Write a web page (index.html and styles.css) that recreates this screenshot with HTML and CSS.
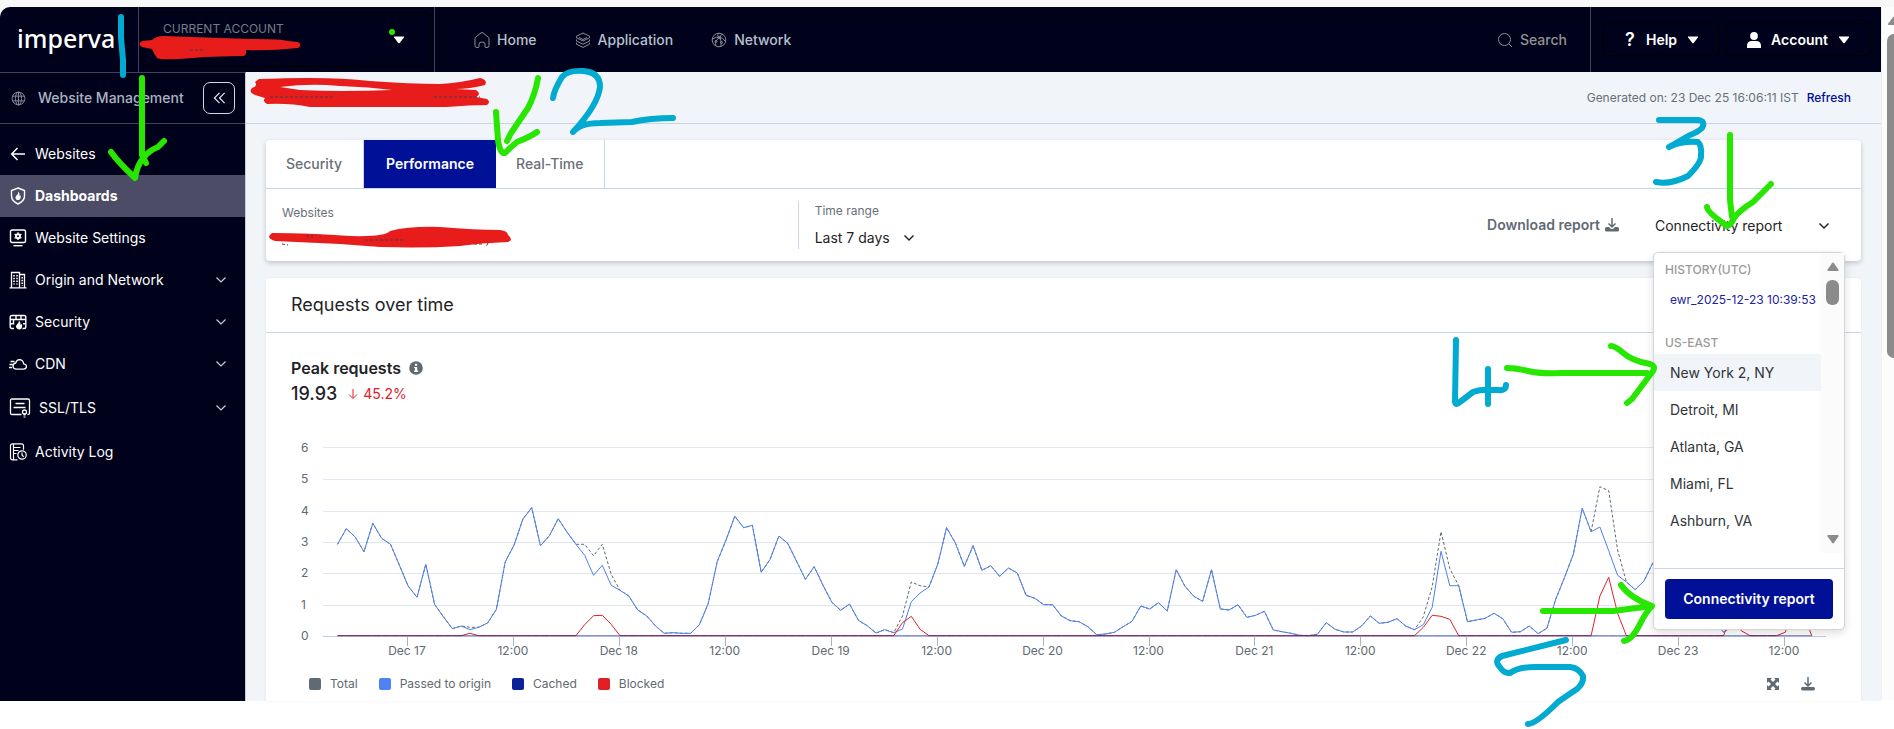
FILE: index.html
```html
<!DOCTYPE html>
<html lang="en">
<head>
<meta charset="utf-8">
<title>imperva - Performance dashboard</title>
<link rel="stylesheet" href="styles.css">
</head>
<body>
<div class="window">
  <div class="app">
    <header class="topbar">
      <a class="logo" href="#">imperva</a>
      <div class="account-cell">
        <button class="account-switch" type="button">
          <span class="account-label">CURRENT ACCOUNT</span>
          <svg class="caret" viewBox="0 0 12 8"><path d="M1.500 0.500h9q1 0 .4.900L6.700 7q-.7.700-1.400 0L1.100 1.400Q.5.500 1.500.500z"/></svg>
        </button>
      </div>
      <nav class="main-nav">
        <a href="#"><svg class="icon" viewBox="0 0 16 16"><path d="M1 6.500Q1 5.600 1.800 5L7 .900q1-.7 2 0L14.200 5q.8.600.8 1.500v7q0 2-2 2h-1q-1 0-1-1V12q0-2-3-2t-3 2v2.500q0 1-1 1H3q-2 0-2-2z"/></svg>Home</a>
        <a href="#"><svg class="icon" viewBox="0 0 16 16"><path d="M8 1l6.500 3.200v1.600L8 9 1.500 5.800V4.200zM1.500 7.500v1.500L8 12.200 14.500 9V7.500M1.500 10.700v1.500L8 15.400l6.500-3.200v-1.500M4 5.500l4 2 4-2"/></svg>Application</a>
        <a href="#"><svg class="icon" viewBox="0 0 16 16"><circle cx="8" cy="8" r="6.800"/><path d="M1.500 7q4-3 7-1.500M8 1.300Q5 4 8.500 5.500q2 2 1.500 9M8.500 5.500q3-.5 6 4M11 2Q9.500 4 8.500 5.500M5 14q-2-5 3-8"/><circle cx="8.500" cy="5.500" r="1.200"/><circle cx="5" cy="9.500" r="1"/><circle cx="10.500" cy="10.500" r="1"/></svg>Network</a>
      </nav>
      <button class="search" type="button"><svg class="icon" viewBox="0 0 16 16"><circle cx="7.500" cy="7.500" r="6"/><path d="M12 12l3 3"/></svg>Search</button>
      <div class="user-cell">
        <button class="menu-btn" type="button"><span class="question">?</span>Help<svg class="caret" viewBox="0 0 12 8"><path d="M1.500 0.500h9q1 0 .4.900L6.700 7q-.7.700-1.400 0L1.100 1.400Q.5.500 1.500.500z"/></svg></button>
        <button class="menu-btn" type="button"><svg class="person" viewBox="0 0 14 16"><circle cx="7" cy="4" r="3.900"/><path d="M0 16v-2q0-5 5-5h4q5 0 5 5v2z"/></svg>Account<svg class="caret" viewBox="0 0 12 8"><path d="M1.500 0.500h9q1 0 .4.900L6.700 7q-.7.700-1.400 0L1.100 1.400Q.5.500 1.500.500z"/></svg></button>
      </div>
    </header>

    <div class="body">
      <aside class="sidebar">
        <div class="side-head">
          <svg class="icon" viewBox="0 0 16 16"><circle cx="8" cy="8" r="6.800"/><ellipse cx="8" cy="8" rx="3.200" ry="6.800"/><path d="M1.800 5.500h12.400M1.800 10.500h12.400M8 1v14"/></svg>
          <span>Website Management</span>
          <button type="button" aria-label="Collapse"><svg viewBox="0 0 14 14"><path d="M7 1.500L1.500 7 7 12.500M12.500 1.500L7 7l5.500 5.500"/></svg></button>
        </div>
        <ul class="side-list">
          <li><a href="#"><svg class="s-icon" viewBox="0 0 18 18"><path stroke-width="1.500" d="M16 9H3M8.500 3L2.700 9l5.800 6"/></svg>Websites</a></li>
          <li><a class="active" href="#"><svg class="s-icon" viewBox="0 0 18 18"><path stroke-width="1.400" d="M9 1l6.500 2.500V9q0 5-6.500 8Q2.500 14 2.500 9V3.500z"/><path class="fill" d="M9.500 4.500Q9.300 7 7.500 8.500 5.500 10.500 7 12.200q2 1.800 4 0 1.500-1.700.5-4l-1 1q.3-3-1-4.700z"/></svg>Dashboards</a></li>
          <li><a href="#"><svg class="s-icon" viewBox="0 0 18 18"><rect x="1.500" y="1" width="15" height="12.500" rx="1.500" stroke-width="1.400"/><path stroke-width="1.400" d="M4.500 16.700h9"/><circle cx="9" cy="7.200" r="2" stroke-width="2"/><path stroke-width="1.400" d="M9 3.300v1.400M9 9.700v1.400M5.600 5.200l1.200.7M11.200 8.500l1.200.7M5.600 9.200l1.200-.7M11.200 5.900l1.200-.7"/></svg>Website Settings</a></li>
          <li><a href="#"><svg class="s-icon" viewBox="0 0 18 18"><path stroke-width="1.300" d="M.5 16.800h17M2.500 16.500V1.500h8v15M10.500 3.500h5v13"/><path stroke-width="1.600" stroke-dasharray="1.500 1.300" d="M5 4v9.500M8 4v9.500M13.200 6v9"/></svg>Origin and Network<svg class="chev" viewBox="0 0 12 8"><path d="M1.500 1.500L6 6l4.500-4.500"/></svg></a></li>
          <li><a href="#"><svg class="s-icon" viewBox="0 0 18 18"><path stroke-width="1.400" d="M5 15.500H3q-1.800 0-1.800-1.800V4.300Q1.200 2.500 3 2.500h12q1.800 0 1.800 1.800v9.400q0 1.800-1.800 1.800h-1.500M1.200 6.500h15.600M1.200 10.800h4M7 2.500v4M12 2.500v4M4.500 6.500v4M14 10.800h3"/><path class="fill" d="M10 7.500q0 2.200-2 3.700-2 2.300 0 4.300 2.500 1.800 4.500 0 1.600-2 .2-4.800l-1 1.300q0-3-1.700-4.500z"/></svg>Security<svg class="chev" viewBox="0 0 12 8"><path d="M1.500 1.500L6 6l4.500-4.500"/></svg></a></li>
          <li><a href="#"><svg class="s-icon" viewBox="0 0 18 18"><path stroke-width="1.300" d="M7.500 14.200h7q3-.2 3-2.900-.2-2.300-2.800-2.500Q14 4.800 10.500 4.700 7.500 4.800 6.700 8q-2.700.3-2.700 3.200.2 2.800 3.500 3M1.500 6.500h4M.5 9.500h3M0 12.500h3"/></svg>CDN<svg class="chev" viewBox="0 0 12 8"><path d="M1.500 1.500L6 6l4.500-4.500"/></svg></a></li>
          <li><a class="tall" href="#"><svg class="s-icon wide" viewBox="0 0 22 20"><path stroke-width="1.300" d="M12.500 16.500H3q-1.500 0-1.500-1.500V2.500Q1.500 1 3 1h16q1.500 0 1.500 1.500V15q0 1.500-1.500 1.500h-.5M6.500 5.500h9M4.500 9.500h12"/><circle cx="15.500" cy="14" r="2" stroke-width="1.300"/><path stroke-width="2" stroke-dasharray="2 1" d="M15.500 15.500v4"/></svg>SSL/TLS<svg class="chev" viewBox="0 0 12 8"><path d="M1.500 1.500L6 6l4.500-4.500"/></svg></a></li>
          <li><a href="#"><svg class="s-icon" viewBox="0 0 18 18"><path stroke-width="1.200" d="M8.500 16.800H3.500q-2 0-2-2V2.800q0-2 2-2h9q2 0 2 2v4M4.500 1v16M4.500 4.500h7M4.500 7.500h5M4.500 10.500h3"/><circle cx="13" cy="12" r="4.200" stroke-width="1.200"/><path stroke-width="1.200" d="M13 9.500V12l1.700 1.800"/></svg>Activity Log</a></li>
        </ul>
      </aside>

      <main class="content">
        <div class="status-bar">
          <span>Generated on: 23 Dec 25 16:06:11 IST</span>
          <a href="#">Refresh</a>
        </div>

        <section class="card filters">
          <div class="tabs">
            <button type="button">Security</button>
            <button class="selected" type="button">Performance</button>
            <button type="button">Real-Time</button>
          </div>
          <div class="filter-row">
            <div class="filter sites"><span class="filter-label">Websites</span></div>
            <div class="filter range">
              <label class="filter-label" for="range">Time range</label>
              <div class="select-wrap">
                <select id="range"><option>Last 7 days</option></select>
                <svg class="chev dark" viewBox="0 0 12 8"><path d="M1.500 1.500L6 6l4.500-4.500"/></svg>
              </div>
            </div>
            <a class="download" href="#">Download report<svg viewBox="0 0 14 14"><path class="line" d="M7 0v9M3.500 5.500L7 9l3.500-3.500"/><path d="M2 9h2l2 2h2l2-2h2q2 0 2 1.500v1.500q0 1.500-1.500 1.500h-11Q0 13.500 0 12v-1.500Q0 9 2 9z"/></svg></a>
            <div class="report">
              <button class="report-toggle" type="button">Connectivity report<svg class="chev dark" viewBox="0 0 12 8"><path d="M1.500 1.500L6 6l4.500-4.500"/></svg></button>
              <div class="menu">
                <div class="menu-scroll">
                  <div class="menu-list">
                    <h3>HISTORY(UTC)</h3>
                    <a class="history" href="#">ewr_2025-12-23 10:39:53</a>
                    <h3 class="region">US-EAST</h3>
                    <button class="hover" type="button">New York 2, NY</button>
                    <button type="button">Detroit, MI</button>
                    <button type="button">Atlanta, GA</button>
                    <button type="button">Miami, FL</button>
                    <button type="button">Ashburn, VA</button>
                  </div>
                  <div class="menu-bar">
                    <svg viewBox="0 0 12 10"><path d="M5 1.200q1-1.200 2 0l4.500 6.600q.5 1.200-.8 1.200H1.300Q0 9 .5 7.800z"/></svg>
                    <span></span>
                    <svg class="down" viewBox="0 0 12 10"><path d="M5 8.800q1 1.200 2 0l4.500-6.600Q12 1 10.700 1H1.300Q0 1 .5 2.200z"/></svg>
                  </div>
                </div>
                <div class="menu-foot"><button type="button">Connectivity report</button></div>
              </div>
            </div>
          </div>
        </section>

        <section class="card requests">
          <h2>Requests over time</h2>
          <div class="metric">
            <h3>Peak requests <svg viewBox="0 0 14 14"><circle cx="7" cy="7" r="6.800"/><path d="M6 2.700h2.200v2H6zM5.200 5.900h3v3.500h1v1.500H5V9.400h1V7.200h-.8z"/></svg></h3>
            <p><strong>19.93</strong><span><svg viewBox="0 0 10 10"><path d="M5 0v9M1 5.500l4 4 4-4"/></svg>45.2%</span></p>
          </div>
          <div class="chart">
            <div class="y-axis"><span>6</span><span>5</span><span>4</span><span>3</span><span>2</span><span>1</span><span>0</span></div>
            <div class="plot">
              <svg id="plot" viewBox="0 0 1503 208" preserveAspectRatio="none"></svg>
              <div class="x-axis"><span>Dec 17</span><span>12:00</span><span>Dec 18</span><span>12:00</span><span>Dec 19</span><span>12:00</span><span>Dec 20</span><span>12:00</span><span>Dec 21</span><span>12:00</span><span>Dec 22</span><span>12:00</span><span>Dec 23</span><span>12:00</span></div>
            </div>
          </div>
          <div class="legend">
            <span class="key total">Total</span>
            <span class="key origin">Passed to origin</span>
            <span class="key cached">Cached</span>
            <span class="key blocked">Blocked</span>
            <button class="tool expand" type="button" aria-label="Expand"><svg viewBox="0 0 14 14"><path d="M1 1h5L4.500 2.500 7 5l2.500-2.500L8 1h5v5l-1.500-1.500L9 7l2.500 2.500L13 8v5H8l1.500-1.500L7 9l-2.500 2.500L6 13H1V8l1.500 1.500L5 7 2.500 4.500 1 6z"/></svg></button>
            <button class="tool" type="button" aria-label="Download"><svg viewBox="0 0 14 14"><path class="line" d="M7 0v9M3.500 5.500L7 9l3.500-3.500"/><path d="M1.500 10h11q1.500 0 1.500 1.700T12.500 13.500h-11Q0 13.500 0 11.700T1.500 10z"/></svg></button>
          </div>
        </section>
      </main>
    </div>
  </div>
  <div class="page-scroll">
    <svg viewBox="0 0 14 10"><path d="M6 1.200q1-1.200 2 0l5 6.600q.5 1.200-.8 1.200H1.800Q.5 9 1 7.800z"/></svg>
    <span></span>
  </div>

  <svg class="marks" viewBox="0 0 1894 729">
    <g class="remnant">
      <path d="M282 244l6 1M410 241h22M474 244h8M488 243l-2 4"/>
    </g>
    <g class="red-fill">
      <path d="M142 41L152 40Q156 36 164 36L250 39Q276 39 283 40 286 41 298 42 303 45 298 48 270 51 246 50 247 57 240 56L205 57Q160 61 157 58 153 52 152 49L142 47Q137 44 142 41z"/>
      <path d="M272 233Q310 233 350 236 385 237 390 231 410 226 440 227 475 230 500 230 508 231 508 235 514 240 508 242 480 243 460 246 400 250 340 244L275 241Q265 238 272 233z"/>
      <path fill-rule="evenodd" d="M259 79Q330 76 370 81 410 84 440 84 460 83 480 78 488 80 485 85 470 89 455 89L476 90Q482 94 476 97L487 99Q491 102 487 105 470 105 446 107L310 107Q290 103 267 104 262 101 265 98L255 95Q248 92 252 88 258 86 255 82zM280 87Q310 83 340 86 370 87 392 90 340 92 300 90z"/>
    </g>
    <path class="remnant" d="M270 97h64M434 97h46M306 236h4M312 235v3M320 235v2M365 240h40M190 50h14"/>
    <g class="green">
      <path d="M142 78V155L146 163M111 152Q118 162 135 178 137 165 144 157 150 150 158 147L164 141"/>
      <path d="M538 78Q535 95 528 108L511 133 507 141M496 112L498 140Q500 154 505 153 512 146 517 142 530 137 537 132"/>
      <path d="M1730 135V200L1732 217M1707 207Q1707 212 1727 226 1731 225 1734 218 1740 210 1753 202L1771 184"/>
      <path d="M1507 368Q1516 368 1528 371 1540 374 1560 373H1647M1611 346Q1615 346 1622 352 1632 361 1650 364 1656 366 1653 371L1632 399 1627 403"/>
      <path d="M1543 611H1613L1652 606M1621 585Q1630 598 1652 606 1646 612 1640 624 1632 640 1624 641"/>
    </g>
    <g class="blue">
      <path d="M121 17V38L123 60V75"/>
      <path d="M553 98Q554 90 562 77 568 70 583 71 600 72 600 87 598 105 573 132 580 123 600 123L632 122Q650 118 673 118"/>
      <path d="M1659 120H1698Q1706 121 1702 128 1698 132 1690 135L1669 147Q1680 141 1698 142 1702 146 1701 155 1702 162 1688 176 1670 185 1656 182"/>
      <path d="M1456 340L1455 402Q1456 406 1460 402L1473 392Q1480 389 1498 390 1506 391 1506 385M1488 369V404"/>
      <path d="M1566 640L1502 656Q1494 660 1499 666 1504 674 1510 673 1518 667 1535 667H1570Q1579 668 1583 676 1584 683 1577 689 1565 697 1558 702 1536 724 1528 724"/>
    </g>
    <circle class="green-dot" cx="392" cy="32" r="3"/>
  </svg>
</div>
<script src="chart.js"></script>
</body>
</html>
```
FILE: styles.css
```css
* { box-sizing: border-box; }
body { margin: 0; background: #fff; color: #1f2326; font-family: Inter, "Liberation Sans", sans-serif; font-size: 14px; line-height: 20px; }
button, select { margin: 0; padding: 0; border: 0; background: none; color: inherit; font: inherit; }
a { color: inherit; text-decoration: none; }
h2, h3, p, ul { margin: 0; padding: 0; font-weight: 400; }
ul { list-style: none; }
svg { display: block; flex: none; }

.window { position: relative; display: flex; align-items: flex-start; min-height: 729px; padding-top: 7px; background: linear-gradient(#f7f7f7 20px, #fff 20px); overflow: hidden; }
.app { flex: 1; min-width: 0; }
.caret { width: 12px; height: 8px; fill: #fff; }
.icon { width: 16px; height: 16px; fill: none; stroke: #8a8f9c; stroke-width: 1; }

.topbar { display: flex; height: 65px; background: #00021b; border-top-left-radius: 10px; color: #b7c0cf; font-weight: 500; }
.logo { width: 138px; padding: 17px 0 0 17px; color: #fff; font: 500 25px/28px "Noto Sans", sans-serif; }
.account-cell { width: 297px; padding: 5px 3px; border: 1px solid #42435a; border-width: 0 1px; }
.account-switch { display: flex; align-items: center; justify-content: space-between; width: 100%; height: 55px; padding: 0 25px 0 20px; border: 1px solid #000; border-radius: 5px; }
.account-label { align-self: flex-start; padding-top: 6px; color: #767c85; font-size: 12px; font-weight: 400; line-height: 20px; }
.main-nav { display: flex; align-items: center; gap: 38px; flex: 1; padding-left: 39px; }
.main-nav a, .search { display: flex; align-items: center; gap: 7px; }
.search { padding-right: 23px; color: #929292; }
.user-cell { display: flex; align-items: center; gap: 6px; padding: 0 10px 0 12px; border-left: 1px solid #42435a; color: #fff; font-weight: 600; }
.menu-btn { display: flex; align-items: center; gap: 10px; height: 33px; padding: 0 20px; border: 1px solid #000; border-radius: 5px; }
.question { width: 12px; font-size: 18px; }
.person { width: 14px; height: 16px; fill: #fff; }

.body { display: flex; }
.sidebar { width: 246px; background: #00021b; border-top: 1px solid #42435a; border-right: 1px solid #c5cddd; color: #fff; font-weight: 500; }
.side-head { display: flex; align-items: center; gap: 12px; height: 51px; padding: 0 10px 0 11px; border-bottom: 1px solid #42435a; color: #abb3c2; }
.side-head span { flex: 1; white-space: nowrap; }
.side-head .icon { width: 15px; height: 15px; }
.side-head button { display: grid; place-items: center; width: 32px; height: 32px; border: 1px solid #d4d8e2; border-radius: 7px; }
.side-head button svg { width: 13px; height: 14px; fill: none; stroke: #e4e7ee; stroke-width: 1.300; }
.side-list { padding-top: 9px; }
.side-list a { display: flex; align-items: center; gap: 8px; height: 42px; padding: 0 18px 0 9px; }
.side-list .tall { height: 46px; }
.side-list .active { background: #4c4c66; font-weight: 700; }
.s-icon { width: 18px; height: 18px; fill: none; stroke: #fff; }
.s-icon.wide { width: 22px; height: 20px; }
.s-icon .fill { fill: #fff; stroke: none; }
.chev { width: 12px; height: 8px; margin-left: auto; fill: none; stroke: #c9ceda; stroke-width: 1.200; }
.chev.dark { stroke: #23272b; stroke-width: 1.500; }

.content { flex: 1; min-width: 0; background: #f1f4f9; }
.status-bar { display: flex; align-items: center; justify-content: flex-end; gap: 8px; height: 52px; padding-right: 30px; border-bottom: 1px solid #c9d5e3; color: #677078; font-size: 12px; }
.status-bar a { color: #00109a; font-weight: 500; }
.card { margin: 16px 20px 0; background: #fff; border-radius: 4px; }
.filters { box-shadow: 0 2px 5px #0003; }
.tabs { display: flex; height: 49px; border-bottom: 1px solid #c9d5e3; }
.tabs button { padding: 0 21px 0 20px; border-right: 1px solid #c9d5e3; color: #687078; font-weight: 500; }
.tabs .selected { padding: 0 22px; border: 0; background: #001097; color: #fff; font-weight: 600; }
.filter-row { display: flex; align-items: center; height: 72px; }
.filter { height: 48px; font-size: 14px; }
.filter-label { display: block; color: #687078; font-size: 12px; line-height: 20px; }
.sites { width: calc(100% / 3); padding: 2px 16px; }
.range { flex: 1; padding-left: 16px; border-left: 1px solid #c9d5e3; }
.select-wrap { display: flex; align-items: center; gap: 12px; padding-top: 7px; }
.select-wrap .chev { margin: 0; }
select { appearance: none; }
.download { display: flex; align-items: center; gap: 5px; margin-right: 34px; color: #5f6a72; font-weight: 600; }
.download svg, .tool svg { width: 14px; height: 14px; fill: #5f6a72; }
.line { fill: none; stroke: #5f6a72; stroke-width: 1.500; }
.report { position: relative; width: 192px; margin-right: 16px; }
.report-toggle { display: flex; align-items: center; width: 100%; height: 54px; padding: 2px 15px 0 2px; }
.menu { position: absolute; top: 100%; left: 0; z-index: 2; width: 100%; background: #fff; border: 1px solid #d3d5d8; border-radius: 5px; box-shadow: 0 3px 8px #0002; }
.menu-scroll { display: flex; height: 300px; }
.menu-list { flex: 1; min-width: 0; padding-top: 7px; }
.menu-list h3 { padding-left: 11px; color: #9a9a9a; font-size: 12px; font-weight: 500; line-height: 20px; }
.menu-list .region { padding-top: 12px; line-height: 22px; }
.history { display: block; padding-left: 16px; color: #1a249f; font-size: 12px; line-height: 40px; white-space: nowrap; }
.menu-list button { display: block; width: 100%; height: 37px; padding-left: 16px; color: #30343a; text-align: left; }
.menu-list .hover { background: #f1f4f9; }
.menu-bar { display: flex; flex-direction: column; align-items: center; width: 23px; padding: 9px 0; background: #fbfbfb; }
.menu-bar svg { width: 12px; height: 10px; fill: #8b8b8b; }
.menu-bar span { width: 13px; height: 25px; margin-top: 8px; border-radius: 6px; background: #8b8b8b; }
.menu-bar .down { margin-top: auto; }
.menu-foot { margin-top: 15px; padding: 10px 11px; border-top: 1px solid #c9d5e3; }
.menu-foot button { width: 100%; height: 40px; border-radius: 4px; background: #001097; color: #fff; font-weight: 600; }

.requests { margin-top: 17px; padding-bottom: 7px; border-radius: 4px 4px 0 0; box-shadow: 0 0 3px #0001; }
.requests h2 { padding: 15px 25px; border-bottom: 1px solid #c9d5e3; font-size: 18px; line-height: 24px; }
.metric { padding: 23px 25px 0; }
.metric h3 { display: flex; align-items: center; gap: 8px; font-size: 16px; font-weight: 600; line-height: 24px; }
.metric h3 svg { width: 14px; height: 14px; fill: #5f6a72; }
.metric h3 path { fill: #fff; }
.metric p { display: flex; align-items: center; gap: 11px; line-height: 27px; }
.metric strong { font-size: 18px; font-weight: 500; }
.metric span { display: flex; align-items: center; gap: 5px; color: #de2129; }
.metric span svg { width: 10px; height: 10px; fill: none; stroke: #de2129; stroke-width: 1; }
.chart { display: flex; gap: 14px; padding: 33px 35px 0; color: #616971; font-size: 12px; }
.y-axis { display: grid; grid-template-rows: repeat(7, 1fr); align-items: center; width: 8px; height: 220px; margin-top: -8px; }
.plot { flex: 1; min-width: 0; overflow: hidden; }
.plot svg { width: 100%; height: 208px; }
.x-axis { display: grid; grid-template-columns: repeat(14, 1fr); width: calc(100% * 1483 / 1503); margin: -5px 0 0 calc(100% * 31 / 1503); line-height: 16px; text-align: center; white-space: nowrap; }
.grid { stroke: #e1e7f0; }
.axis { stroke: #c0cde1; }
.tick { stroke: #a9b5c4; }
.series { fill: none; stroke-width: 1; vector-effect: non-scaling-stroke; }
.s-total { stroke: #5f6a72; stroke-dasharray: 3 2; }
.s-origin { stroke: #4f80ee; }
.s-cached { stroke: #0b2396; opacity: .6; }
.s-blocked { stroke: #de2129; }
.legend { display: flex; align-items: center; gap: 21px; padding: 15px 46px 0 43px; color: #616971; font-size: 12px; }
.key { display: flex; align-items: center; gap: 9px; }
.key::before { content: ""; width: 12px; height: 12px; border-radius: 2px; background: #5f6a72; }
.origin::before { background: #4f82f5; }
.cached::before { background: #0b2396; }
.blocked::before { background: #df2027; }
.expand { margin-left: auto; }

.page-scroll { display: flex; flex-direction: column; width: 13px; height: 693px; padding: 9px 0 0 5px; background: #fcfcfc; border-left: 1px solid #f0f0f0; }
.page-scroll svg { width: 14px; height: 10px; fill: #8b8b8b; }
.page-scroll span { width: 14px; height: 324px; margin-top: 8px; border-radius: 7px; background: #8b8b8b; }

.marks { position: absolute; top: 0; left: 0; z-index: 3; width: 1894px; height: 729px; pointer-events: none; fill: none; stroke-width: 6; stroke-linecap: round; stroke-linejoin: round; }
.green { stroke: #27e600; }
.blue { stroke: #00aad0; }
.red-fill { fill: #e71c1b; }
.green-dot { fill: #27e600; }
.remnant { stroke: #4a3a55; stroke-width: 1; stroke-linecap: butt; stroke-dasharray: 3 2; }
```
FILE: chart.js
```js
// Hourly samples as plot heights: 587 is zero and one request is 94 units.
const ZERO = 587;
const origin = [313,266,291,335,250,295,313,375,438,472,373,493,530,566,558,569,562,549,508,366,315,237,203,317,287,236,276,313,346,406,376,436,451,468,510,527,557,580,578,580,580,554,490,366,301,229,263,256,397,358,288,310,364,418,380,436,487,511,492,541,557,579,569,578,567,485,459,441,372,263,310,379,317,391,377,409,384,399,466,475,494,494,528,542,545,560,584,582,577,560,544,498,507,488,513,389,439,469,484,389,507,510,494,532,526,514,570,575,580,586,587,583,548,568,576,576,558,528,550,547,536,558,569,554,502,334,437,437,545,540,535,520,536,577,575,558,581,565,477,412,342,205,275,261,332,406,426,449,423,368,330,360,400,440,480,510,550,576,560,566,540,500,470,440,460,480,500,520];
const totals = { 15: 562, 28: 313, 29: 347, 30: 313, 31: 403, 64: 528, 65: 426, 66: 437, 123: 530, 124: 440, 125: 275, 126: 386, 143: 140, 144: 152, 145: 330 };
const blocks = { 15: 580, 28: 554, 29: 527, 30: 526, 31: 553, 64: 548, 65: 529, 66: 568, 123: 562, 124: 526, 125: 529, 126: 538, 143: 468, 144: 412, 145: 520, 158: 520, 159: 572, 164: 577, 165: 500, 166: 520 };
const pts = (rows) => rows.map((v, i) => (14.5 + 8.828 * i).toFixed(1) + ',' + (v / 3).toFixed(1)).join(' ');
const line = (cls, rows) => `<polyline class="series ${cls}" points="${pts(rows)}"/>`;

let out = '';
for (const y of [7.5, 39.5, 71.5, 102.5, 133.5, 165.5]) out += `<path class="grid" d="M0 ${y}H1503"/>`;
out += '<path class="axis" d="M0 196.500H1503"/>';
for (let k = 0; k < 14; k++) out += `<path class="tick" d="M${Math.round(84 + 105.93 * k) + 0.5} 197V206"/>`;
out += line('s-total', origin.map((v, i) => totals[i] ?? v));
out += line('s-origin', origin);
out += line('s-blocked', origin.map((v, i) => blocks[i] ?? ZERO));
out += line('s-cached', origin.map(() => ZERO));
document.getElementById('plot').innerHTML = out;
```
